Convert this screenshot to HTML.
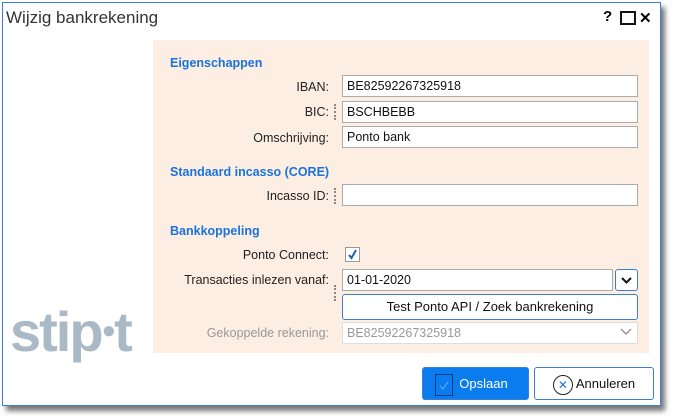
<html><head><style>
body{margin:0;width:674px;height:419px;background:#fff;font-family:"Liberation Sans",sans-serif;position:relative;overflow:hidden}
.dlg{position:absolute;left:2px;top:2px;width:657px;height:402px;border:1px solid #3c7fd0;background:#fff;box-shadow:4px 5px 5px #777}
.t{position:absolute;left:6px;top:8px;font-size:17px;color:#333}
.panel{position:absolute;left:153px;top:40px;width:496px;height:313px;background:#fdeee4}
.h{position:absolute;left:170px;font-size:12.5px;font-weight:bold;color:#1a73d9}
.l{position:absolute;right:345px;font-size:12.5px;color:#222;text-align:right;white-space:nowrap}
.in{position:absolute;left:342px;width:290px;height:20px;border:1px solid #aaa;background:#fff;font-size:12.5px;line-height:20px;padding-left:4px;color:#111}
.dots{position:absolute;left:334px;width:2px;border-left:2px dotted #888}
.btn{position:absolute;border:1px solid #3c7fd0;border-radius:3px;font-size:13px;text-align:center}
</style></head><body>
<div class="dlg"></div>
<div class="t">Wijzig bankrekening</div>
<div style="position:absolute;left:603px;top:8px;font-size:15px;font-weight:bold">?</div>
<div style="position:absolute;left:620px;top:11px;width:12px;height:10px;border:2px solid #111"></div>
<div style="position:absolute;left:639px;top:9px;font-size:15px;font-weight:bold">✕</div>
<div class="panel"></div>
<div class="h" style="top:56px">Eigenschappen</div>
<div class="l" style="top:80px">IBAN:</div><div class="in" style="top:75px">BE82592267325918</div>
<div class="l" style="top:105px">BIC:</div><div class="dots" style="top:104px;height:16px"></div><div class="in" style="top:101px">BSCHBEBB</div>
<div class="l" style="top:131px">Omschrijving:</div><div class="in" style="top:126px">Ponto bank</div>
<div class="h" style="top:165px">Standaard incasso (CORE)</div>
<div class="l" style="top:189px">Incasso ID:</div><div class="dots" style="top:188px;height:16px"></div><div class="in" style="top:184px"></div>
<div class="h" style="top:224px">Bankkoppeling</div>
<div class="l" style="top:248px">Ponto Connect:</div>
<div style="position:absolute;left:345px;top:247px;width:13px;height:13px;border:1px solid #999;background:#fff"><svg width="13" height="13"><path d="M3 7 L5.5 10 L10 2" stroke="#1a5fb4" stroke-width="2" fill="none"/></svg></div>
<div class="l" style="top:273px">Transacties inlezen vanaf:</div>
<div class="dots" style="top:285px;height:16px"></div>
<div class="in" style="top:269px;width:265px">01-01-2020</div>
<div style="position:absolute;left:615px;top:269px;width:21px;height:20px;border:1px solid #3c7fd0;border-radius:3px;background:#fff"><svg width="21" height="20"><path d="M6 8 L10.5 12.5 L15 8" stroke="#111" stroke-width="2" fill="none"/></svg></div>
<div class="btn" style="left:342px;top:294px;width:294px;height:24px;line-height:24px;background:#fff;color:#111">Test Ponto API / Zoek bankrekening</div>
<div class="l" style="top:326px;color:#999">Gekoppelde rekening:</div>
<div class="in" style="top:322px;border-color:#ddd;color:#999">BE82592267325918</div>
<svg style="position:absolute;left:619px;top:326px" width="14" height="12"><path d="M2 3 L7 8 L12 3" stroke="#999" stroke-width="1.5" fill="none"/></svg>
<div style="position:absolute;left:10px;top:299px;font-size:56px;font-weight:bold;color:#a9b9c6;letter-spacing:-2px">stip<span style="font-size:24px;vertical-align:13px">●</span>t</div>
<div class="btn" style="left:422px;top:367px;width:105px;height:31px;background:#0a7cf0;color:#fff;line-height:31px"><span style="display:inline-block;width:16px;height:20px;border:1px solid #0a3c80;vertical-align:middle;margin-right:6px;margin-left:-8px;position:relative"><svg width="16" height="20" style="position:absolute;left:0;top:0"><path d="M4 11 L7 14 L12 7" stroke="#6ab0ff" stroke-width="1" fill="none"/></svg></span>Opslaan</div>
<div class="btn" style="left:534px;top:367px;width:118px;height:31px;background:#fff;color:#111;line-height:31px"><span style="display:inline-block;width:18px;height:18px;border:1px solid #222;border-radius:50%;vertical-align:middle;line-height:18px;font-size:12px;color:#1a73d9;margin-right:3px">✕</span>Annuleren</div>
</body></html>
